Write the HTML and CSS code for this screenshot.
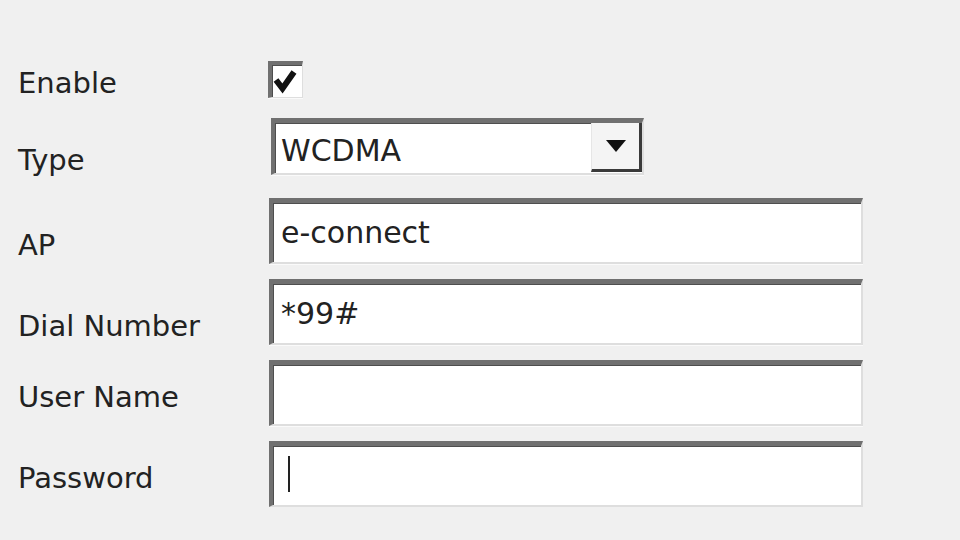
FILE: index.html
```html
<!DOCTYPE html>
<html lang="en">
<head>
    <meta charset="UTF-8">
    <meta name="viewport" content="width=device-width, initial-scale=1.0">
    <title>Dial-up Settings</title>
    <link rel="stylesheet" href="styles.css">
</head>
<body>
    <form class="settings">
        <div class="row row-check">
            <label class="label">Enable</label>
            <span class="check">
                <svg width="30" height="32" viewBox="0 0 30 32">
                    <path d="M4 15 L10.5 23.5 L22 7" fill="none" stroke="#111" stroke-width="6"/>
                </svg>
            </span>
        </div>

        <div class="row row-combo">
            <label class="label label-low">Type</label>
            <div class="combo">
                <span class="combo-value">WCDMA</span>
                <span class="combo-btn">
                    <svg width="20" height="12" viewBox="0 0 20 12">
                        <path d="M0 0 H20 L10 12 Z" fill="#111"/>
                    </svg>
                </span>
            </div>
        </div>

        <div class="row row-first-input">
            <label class="label label-low">AP</label>
            <input class="field" type="text" value="e-connect">
        </div>

        <div class="row">
            <label class="label label-low">Dial Number</label>
            <input class="field" type="text" value="*99#">
        </div>

        <div class="row">
            <label class="label">User Name</label>
            <input class="field" type="text" value="">
        </div>

        <div class="row">
            <label class="label">Password</label>
            <div class="field-wrap">
                <input class="field" type="password" value="">
                <span class="caret"></span>
            </div>
        </div>
    </form>
</body>
</html>
```

FILE: styles.css
```css
* {
    box-sizing: border-box;
}

body {
    margin: 0;
    background: #f0f0f0;
    font-family: "DejaVu Sans", sans-serif;
    color: #222;
}

.settings {
    display: flex;
    flex-direction: column;
    gap: 15px;
    padding: 61px 0 0 18px;
}

.row {
    display: grid;
    grid-template-columns: 251px 594px;
    align-items: center;
    height: 66px;
}

.row-check {
    height: 37px;
}

.row-combo {
    height: 57px;
    margin-top: 4px;
}

.row-first-input {
    margin-top: 9px;
}

.label {
    font-size: 29px;
    line-height: 1;
    padding-top: 8px;
}

.label-low {
    padding-top: 29px;
}

/* sunken 3D edge shared by the boxes */
.check,
.combo,
.field {
    background: #fff;
    border-style: solid;
    border-width: 5px 2px 2px 4px;
    border-color: #707070 #dedede #dedede #707070;
    box-shadow: inset 1px 1px 0 #4e4e4e, 0 1px 0 #fafafa;
}

.check {
    width: 35px;
    height: 37px;
    margin-left: -1px;
    border-width: 4px 1px 1px 4px;
}

.check svg {
    display: block;
}

.combo {
    display: flex;
    align-items: stretch;
    width: 373px;
    height: 57px;
    margin-left: 2px;
}

.combo-value {
    flex: 1;
    display: flex;
    align-items: center;
    padding: 6px 0 0 6px;
    font-size: 30px;
}

.combo-btn {
    width: 51px;
    display: flex;
    align-items: center;
    justify-content: center;
    background: #f4f4f4;
    border-left: 1px solid #e6e6e6;
    border-right: 3px solid #3a3a3a;
    border-bottom: 3px solid #3a3a3a;
    margin: 0 0 1px;
}

.field {
    width: 594px;
    height: 66px;
    padding: 0 8px;
    font-family: "DejaVu Sans", sans-serif;
    font-size: 30px;
    color: #222;
    outline: none;
}

.field-wrap {
    position: relative;
}

.caret {
    position: absolute;
    left: 19px;
    top: 15px;
    width: 2px;
    height: 36px;
    background: #222;
}
```
